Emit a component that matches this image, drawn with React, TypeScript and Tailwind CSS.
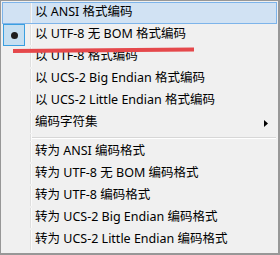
import React from "react";

type Item = { label: string; hover?: boolean; checked?: boolean; submenu?: boolean };

const topItems: Item[] = [
  { label: "以 ANSI 格式编码", hover: true },
  { label: "以 UTF-8 无 BOM 格式编码", checked: true },
  { label: "以 UTF-8 格式编码" },
  { label: "以 UCS-2 Big Endian 格式编码" },
  { label: "以 UCS-2 Little Endian 格式编码" },
  { label: "编码字符集", submenu: true },
];

const bottomItems: Item[] = [
  { label: "转为 ANSI 编码格式" },
  { label: "转为 UTF-8 无 BOM 编码格式" },
  { label: "转为 UTF-8 编码格式" },
  { label: "转为 UCS-2 Big Endian 编码格式" },
  { label: "转为 UCS-2 Little Endian 编码格式" },
];

const MenuRow = ({ item }: { item: Item }) => {
  return (
    <div
      className={
        item.hover
          ? "flex h-[22px] items-stretch border border-[#7db4ea] bg-[#d1e2f3]"
          : "flex h-[22px] items-stretch border border-transparent"
      }
    >
      {/* gutter */}
      <div className="flex w-[28px] items-center border-r border-[#dfdfdf]">
        {item.checked && (
          <div className="flex h-[22px] w-[22px] items-center justify-center border border-[#3a9fe0] bg-[#c6dff1]">
            <div className="h-[7px] w-[7px] rounded-full bg-[#1e1e1e]" />
          </div>
        )}
      </div>
      <div className="w-px bg-white/70" />
      <div className="flex flex-1 items-center justify-between pb-[2px] pl-[3px] pr-[8px] text-black">
        <span className="leading-none">{item.label}</span>
        {item.submenu && (
          <svg width="4" height="7" viewBox="0 0 4 7" className="mt-[2px]">
            <path d="M0 0 L4 3.5 L0 7 Z" fill="#000" />
          </svg>
        )}
      </div>
    </div>
  );
};

const App = () => {
  return (
    <div className="relative h-[255px] w-[280px] overflow-hidden border border-r-2 border-b-2 border-[#979797] bg-[#f0f0f0] p-px font-['Segoe_UI','Noto_Sans','Noto_Sans_CJK_SC',sans-serif] text-[12.5px]">
      {/* Encode as */}
      {topItems.map((item) => (
        <MenuRow key={item.label} item={item} />
      ))}

      {/* Separator */}
      <div className="flex h-[7px] items-stretch px-px">
        <div className="w-[28px] border-r border-[#dfdfdf]" />
        <div className="w-px bg-white/70" />
        <div className="flex-1 pt-[3px]">
          <div className="h-px bg-[#d7d7d7]" />
          <div className="h-px bg-white" />
        </div>
      </div>

      {/* Convert to */}
      {bottomItems.map((item) => (
        <MenuRow key={item.label} item={item} />
      ))}

      {/* red annotation stroke */}
      <svg className="pointer-events-none absolute left-0 top-0" width="280" height="60">
        <path d="M12 50 L193 48.6" stroke="#e5484b" strokeWidth="4" strokeLinecap="butt" />
      </svg>
    </div>
  );
};

export default App;
